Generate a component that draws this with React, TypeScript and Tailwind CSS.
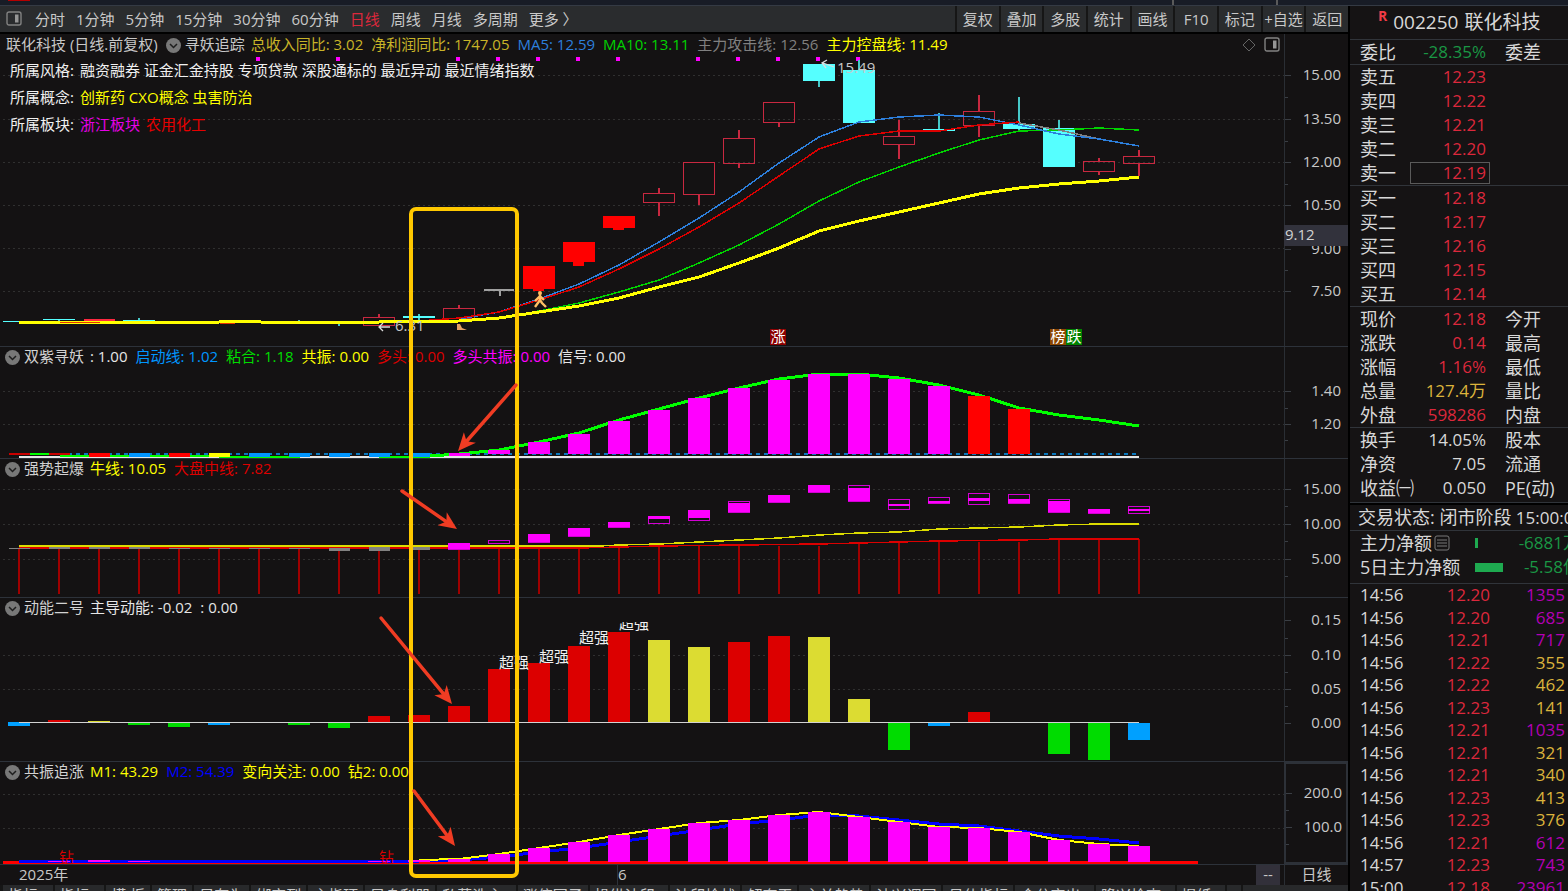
import React from "react";
import clsx from "clsx";

type Point = [number, number];

// Candles sit 40px apart, the first one is centred on x = 19
const cx = (i: number) => 19 + i * 40;
const toPoints = (pts: Point[]) => pts.map((p) => p.join(",")).join(" ");

const periods = [
  "分时", "1分钟", "5分钟", "15分钟", "30分钟", "60分钟",
  "日线", "周线", "月线", "多周期", "更多 〉",
];
const tools = ["复权", "叠加", "多股", "统计", "画线", "F10", "标记", "+自选", "返回"];

const bottomTabs = [
  "指标A", "指标B", "模 板", "管理", "另存为", "绑定到", "主指环", "异身利器",
  "私募洗主1", "涨停回子", "操纵波印1", "波印检战", "解套王", "主关趋势",
  "波兴调回", "易仕指标", "金分变出1", "隆兴检查1", "提纸1", "!",
];

const mainLegend = [
  { text: "总收入同比: 3.02", color: "text-[#c8b428]" },
  { text: "净利润同比: 1747.05", color: "text-[#c8b428]" },
  { text: "MA5: 12.59", color: "text-[#2d7fdc]" },
  { text: "MA10: 13.11", color: "text-[#00d200]" },
  { text: "主力攻击线: 12.56", color: "text-[#808080]" },
  { text: "主力控盘线: 11.49", color: "text-[#ffff00]" },
];

const tags = [
  { label: "所属风格:", parts: [{ text: "融资融券 证金汇金持股 专项贷款 深股通标的 最近异动 最近情绪指数", color: "text-[#f0f0f0]" }] },
  { label: "所属概念:", parts: [{ text: "创新药 CXO概念 虫害防治", color: "text-[#ffff00]" }] },
  {
    label: "所属板块:",
    parts: [
      { text: "浙江板块", color: "text-[#e600e6]" },
      { text: "农用化工", color: "text-[#e60000]" },
    ],
  },
];

// body top / bottom, wick top / bottom
type Candle = { i: number; kind: "up" | "down" | "limit"; t: number; b: number; wt?: number; wb?: number };

const candles: Candle[] = [
  { i: 0, kind: "down", t: 321, b: 322 },
  { i: 1, kind: "down", t: 319, b: 320, wb: 322 },
  { i: 3, kind: "down", t: 320, b: 321, wt: 318 },
  { i: 7, kind: "down", t: 321, b: 322, wt: 320 },
  { i: 8, kind: "down", t: 323, b: 324, wb: 326 },
  { i: 9, kind: "up", t: 317, b: 325, wt: 314 },
  { i: 10, kind: "down", t: 316, b: 318, wt: 314, wb: 320 },
  { i: 11, kind: "up", t: 308, b: 318, wt: 305 },
  { i: 13, kind: "limit", t: 266, b: 289 },
  { i: 14, kind: "limit", t: 242, b: 262 },
  { i: 15, kind: "limit", t: 216, b: 228 },
  { i: 16, kind: "up", t: 193, b: 202, wt: 188, wb: 216 },
  { i: 17, kind: "up", t: 162, b: 194, wb: 205 },
  { i: 18, kind: "up", t: 138, b: 163, wt: 130, wb: 168 },
  { i: 19, kind: "up", t: 102, b: 122, wb: 127 },
  { i: 20, kind: "down", t: 64, b: 81, wb: 87 },
  { i: 21, kind: "down", t: 70, b: 123, wt: 60 },
  { i: 22, kind: "up", t: 136, b: 144, wt: 120, wb: 159 },
  { i: 23, kind: "down", t: 129, b: 131, wt: 113 },
  { i: 24, kind: "up", t: 111, b: 125, wt: 95, wb: 137 },
  { i: 25, kind: "down", t: 124, b: 129, wt: 97, wb: 131 },
  { i: 26, kind: "down", t: 128, b: 167, wt: 120 },
  { i: 27, kind: "up", t: 161, b: 171, wt: 158, wb: 175 },
  { i: 28, kind: "up", t: 156, b: 163, wt: 150, wb: 176 },
];

const ma5: Point[] = [
  [459, 319], [499, 312], [539, 299], [579, 284], [619, 265], [659, 242], [699, 218], [739, 192],
  [779, 163], [819, 137], [859, 122], [899, 117], [939, 115], [979, 117], [1019, 125],
  [1059, 134], [1099, 139], [1139, 146],
];
const redLine: Point[] = [
  [379, 322], [419, 321], [459, 318], [499, 312], [539, 300], [579, 287], [619, 269], [659, 249],
  [699, 227], [739, 203], [779, 176], [819, 149], [859, 136], [899, 131], [939, 131],
  [979, 125], [1019, 122],
];
const greyLine: Point[] = [[1019, 123], [1059, 130], [1099, 139], [1139, 146]];
const ma10: Point[] = [
  [459, 321], [499, 318], [539, 311], [579, 303], [619, 292], [659, 280], [699, 263], [739, 245],
  [779, 224], [819, 201], [859, 182], [899, 167], [939, 153], [979, 140], [1019, 131],
  [1059, 130], [1099, 128], [1139, 130],
];
const controlLine: Point[] = [
  [19, 322], [219, 322], [221, 321], [259, 321], [261, 322], [379, 322], [459, 321], [499, 318],
  [539, 312], [579, 306], [619, 298], [659, 287], [699, 277], [739, 263], [779, 248],
  [819, 231], [859, 221], [899, 212], [939, 203], [979, 194], [1019, 188], [1059, 184],
  [1099, 181], [1139, 177],
];
const signalDots = [257, 337, 457, 497, 537, 577, 617, 697, 737, 777, 817, 857];

// [candle index, top]
const trendBars: Point[] = [
  [12, 450], [13, 442], [14, 434], [15, 421], [16, 410], [17, 398], [18, 388], [19, 380],
  [20, 374], [21, 374], [22, 379], [23, 386], [24, 396], [25, 409],
];
const trendLine: Point[] = [
  [430, 456], [459, 454], [499, 450], [539, 442], [579, 433], [619, 420], [659, 409], [699, 398],
  [739, 388], [779, 379], [819, 374], [859, 374], [899, 378], [939, 385], [979, 395],
  [1019, 408], [1059, 415], [1099, 420], [1139, 426],
];
const trendBlocks = [
  { x: 9, color: "#c80000" }, { x: 89, color: "#ff0000" }, { x: 129, color: "#0096ff" },
  { x: 169, color: "#ff0000" }, { x: 209, color: "#ffff00" }, { x: 249, color: "#0096ff" },
  { x: 289, color: "#0096ff" }, { x: 329, color: "#0096ff" }, { x: 369, color: "#0096ff" },
  { x: 409, color: "#0096ff" },
];

const bullLine: Point[] = [
  [19, 546], [599, 546], [619, 545], [659, 544], [699, 542], [739, 540], [779, 538], [819, 535],
  [859, 533], [899, 532], [939, 529], [979, 528], [1019, 527], [1059, 525], [1099, 524], [1139, 524],
];
const marketLine: Point[] = [
  [19, 548], [579, 548], [659, 546], [739, 545], [819, 544], [859, 543], [939, 541], [1019, 540], [1059, 539], [1139, 539],
];
const greyBlocks = [
  [0, 548, 1], [1, 547, 2], [2, 547, 2], [3, 547, 2], [4, 548, 1], [5, 548, 1], [6, 548, 1],
  [7, 548, 1], [8, 548, 3], [9, 546, 5], [10, 547, 3],
];
// outline top / bottom, filled top / bottom
const burstBlocks = [
  [11, 543, 549, 543, 549], [12, 540, 543, 540, 540], [13, 534, 542, 534, 542], [14, 528, 536, 528, 536],
  [15, 522, 527, 522, 527], [16, 516, 523, 516, 519], [17, 510, 520, 510, 518], [18, 501, 512, 503, 512],
  [19, 495, 502, 495, 502], [20, 485, 492, 485, 492], [21, 485, 501, 488, 501], [22, 499, 509, 504, 506],
  [23, 497, 503, 501, 503], [24, 493, 504, 498, 501], [25, 494, 503, 499, 503], [26, 499, 512, 501, 512],
  [27, 509, 513, 509, 513], [28, 506, 513, 509, 511],
];

// [candle index, top, bottom, color]
const energyBars: [number, number, number, string][] = [
  [0, 722, 726, "#00a0ff"], [1, 720, 722, "#dc0000"], [2, 721, 722, "#dcdc32"], [3, 723, 725, "#00dc00"],
  [4, 723, 727, "#00dc00"], [5, 723, 725, "#00a0ff"], [7, 723, 725, "#00dc00"], [8, 723, 728, "#00dc00"],
  [9, 716, 722, "#dc0000"], [10, 715, 722, "#dc0000"], [11, 706, 722, "#dc0000"], [12, 669, 722, "#dc0000"],
  [13, 663, 722, "#dc0000"], [14, 646, 722, "#dc0000"], [15, 632, 722, "#dc0000"], [16, 640, 722, "#dcdc32"],
  [17, 647, 722, "#dcdc32"], [18, 642, 722, "#dc0000"], [19, 636, 722, "#dc0000"], [20, 637, 722, "#dcdc32"],
  [21, 699, 722, "#dcdc32"], [22, 723, 750, "#00dc00"], [23, 723, 726, "#00a0ff"], [24, 712, 722, "#dc0000"],
  [26, 723, 754, "#00dc00"], [27, 723, 760, "#00dc00"], [28, 723, 740, "#00a0ff"],
];
const strongLabels: Point[] = [[499, 668], [539, 662], [579, 643], [619, 629]];

const chaseBars: Point[] = [
  [1, 861], [2, 860], [3, 861], [9, 861], [10, 860], [11, 859], [12, 854], [13, 848], [14, 842],
  [15, 835], [16, 829], [17, 823], [18, 820], [19, 815], [20, 812], [21, 817], [22, 822],
  [23, 827], [24, 828], [25, 832], [26, 840], [27, 844], [28, 846],
];
const m1: Point[] = chaseBars.slice(4).map(([i, y]) => [cx(i), y]);
const m2: Point[] = [
  [19, 861], [419, 861], [459, 860], [499, 857], [539, 852], [579, 848], [619, 842], [659, 836],
  [699, 830], [739, 824], [779, 820], [819, 815], [859, 816], [899, 820], [939, 824],
  [979, 826], [1019, 831], [1059, 836], [1099, 839], [1139, 843],
];

const asks = [["卖五", "12.23"], ["卖四", "12.22"], ["卖三", "12.21"], ["卖二", "12.20"], ["卖一", "12.19"]];
const bids = [["买一", "12.18"], ["买二", "12.17"], ["买三", "12.16"], ["买四", "12.15"], ["买五", "12.14"]];

const RED = "text-[#dc283c]";
const WHITE = "text-[#d8d8d8]";
const GREEN = "text-[#1a9644]";
const GOLD = "text-[#dcb43c]";
const PURPLE = "text-[#b400b4]";

const ticks = [
  ["14:56", "12.20", "1355"], ["14:56", "12.20", "685"], ["14:56", "12.21", "717"],
  ["14:56", "12.22", "355"], ["14:56", "12.22", "462"], ["14:56", "12.23", "141"],
  ["14:56", "12.21", "1035"], ["14:56", "12.21", "321"], ["14:56", "12.21", "340"],
  ["14:56", "12.23", "413"], ["14:56", "12.23", "376"], ["14:56", "12.21", "612"],
  ["14:57", "12.23", "743"], ["15:00", "12.18", "23961"],
];

const PanelIcon = () => (
  <svg className="size-4 shrink-0" viewBox="0 0 16 16" fill="none">
    <rect x="1" y="1" width="14" height="13" rx="2" stroke="#828282" strokeWidth="1.4" />
    <rect x="9" y="3.5" width="3.5" height="8" fill="#969696" />
  </svg>
);

const FoldButton = () => (
  <button type="button" aria-label="指标菜单" className="shrink-0">
    <svg className="size-[15px]" viewBox="0 0 15 15">
      <circle cx="7.5" cy="7.5" r="7.5" fill="#787878" />
      <path d="M4 6l3.5 3.5L11 6" fill="none" stroke="#1e1e1e" strokeWidth="1.5" />
    </svg>
  </button>
);

type LegendItem = { text: string; color: string };

const LegendItems = ({ items }: { items: LegendItem[] }) => (
  <span className="ml-1.5 flex gap-2">
    {items.map((item) => (
      <span key={item.text} className={item.color}>
        {item.text}
      </span>
    ))}
  </span>
);

const Legend = ({ title, items }: { title: string; items: LegendItem[] }) => (
  <div className="flex h-6 items-start pl-[5px] leading-[18px] whitespace-nowrap">
    <span className="flex h-5 items-center">
      <FoldButton />
    </span>
    <span className="ml-1 text-[#d2d2d2]">{title}</span>
    <LegendItems items={items} />
  </div>
);

const GridLines = ({ ys }: { ys: number[] }) => (
  <>
    {ys.map((y) => (
      <line key={y} x1="3" x2="100%" y1={y} y2={y} stroke="#303030" strokeDasharray="2 3" />
    ))}
  </>
);

// Plot area; `top` is the y value drawn on the first pixel row
const Plot = ({ top, className, children }: { top: number; className: string; children: React.ReactNode }) => (
  <svg className={clsx("block w-full", className)} shapeRendering="crispEdges">
    <g transform={`translate(0 ${-top})`}>{children}</g>
  </svg>
);

type AxisProps = { top: number; className: string; labels: [string, number][]; minor?: number[] };

const Axis = ({ top, className, labels, minor = [] }: AxisProps) => (
  <svg className={clsx("block w-16 shrink-0", className)} shapeRendering="crispEdges">
    <g transform={`translate(0 ${-top})`}>
      {minor.map((y) => (
        <line key={y} x1="0" x2="3" y1={y} y2={y} stroke="#3a3e44" />
      ))}
      {labels.map(([text, y]) => (
        <React.Fragment key={text}>
          <line x1="0" x2="6" y1={y} y2={y} stroke="#3a3e44" />
          <text x="56" y={y + 5} textAnchor="end" fill="#c8c8c8">
            {text}
          </text>
        </React.Fragment>
      ))}
    </g>
  </svg>
);

const Panel = ({ children, axis }: { children: React.ReactNode; axis: React.ReactNode }) => (
  <section className="flex border-b border-[#2d323a]">
    <div className="min-w-0 flex-1">{children}</div>
    {axis}
  </section>
);

const CandleShape = ({ i, kind, t, b, wt, wb }: Candle) => {
  const x = cx(i);
  const stroke = kind === "down" ? "#46c8c8" : "#c82840";
  return (
    <g>
      {wt && <line x1={x} x2={x} y1={wt} y2={t} stroke={stroke} strokeWidth="2" />}
      {wb && <line x1={x} x2={x} y1={b} y2={wb} stroke={stroke} strokeWidth="2" />}
      {kind === "up" && <rect x={x - 15.5} y={t + 0.5} width="31" height={b - t} fill="none" stroke={stroke} />}
      {kind === "down" && <rect x={x - 16} y={t} width="32" height={b - t} fill="#55ffff" />}
      {kind === "limit" && (
        <>
          <rect x={x - 16} y={t} width="32" height={b - t} fill="#ff0000" />
          <rect x={x - 6} y={b} width="11" height={i === 14 ? 4 : 2} fill="#ff0000" />
        </>
      )}
    </g>
  );
};

const Badge = ({ x, text, fill }: { x: number; text: string; fill: string }) => (
  <g>
    <rect x={x} y="329" width="16" height="16" fill={fill} />
    <text x={x + 8} y="342" textAnchor="middle" fill="#ffffff">
      {text}
    </text>
  </g>
);

const PricePanel = () => (
  <Panel
    axis={
      <Axis
        top={34}
        className="h-[312px] border-l border-[#2a2e34]"
        labels={[["15.00", 75], ["13.50", 119], ["12.00", 162], ["10.50", 205], ["9.00", 249], ["7.50", 291]]}
        minor={[97, 141, 184, 227, 270]}
      />
    }
  >
    <div className="flex h-6 items-start pl-[6px] leading-5 whitespace-nowrap">
      <span className="text-[#c8c8c8]">联化科技 (日线.前复权)</span>
      <span className="ml-2 flex h-[22px] items-center">
        <FoldButton />
      </span>
      <span className="ml-1 text-[#c8c8c8]">寻妖追踪</span>
      <LegendItems items={mainLegend} />
      <span className="ml-auto flex h-[22px] items-center gap-2 pr-1">
        <svg className="size-3.5" viewBox="0 0 14 14">
          <path d="M7 1l6 6-6 6-6-6z" fill="none" stroke="#646464" />
        </svg>
        <PanelIcon />
      </span>
    </div>
    <div className="relative">
      <Plot top={58} className="h-[288px] overflow-visible">
        <GridLines ys={[75, 119, 162, 205, 248, 291]} />
        {signalDots.map((x) => (
          <rect key={x} x={x - 1} y="57" width="4" height="4" fill="#ff00ff" />
        ))}
        {candles.map((c) => (
          <CandleShape key={c.i} {...c} />
        ))}
        <path d="M484 289.5h30M499.5 290v6" stroke="#a0a0a0" fill="none" strokeWidth="2" />
        <path d="M84 320h31" stroke="#ff2840" strokeWidth="3" />
        <g fill="none">
          <polyline points={toPoints(ma10)} stroke="#00d200" strokeWidth="1.5" />
          <polyline points={toPoints(greyLine)} stroke="#808080" strokeWidth="1.5" />
          <polyline points={toPoints(ma5)} stroke="#2d7fdc" strokeWidth="1.5" />
          <polyline points={toPoints(redLine)} stroke="#dc0000" strokeWidth="1.5" />
          <polyline points={toPoints(controlLine)} stroke="#ffff00" strokeWidth="3" />
        </g>
        <path d="M60 322.5h40M220 323.5h15" stroke="#e63200" />
        <g shapeRendering="auto">
          <path d="M390 327h-11m4-4l-4 4 4 4" fill="none" stroke="#dcdcdc" strokeWidth="1.3" />
          <text x="395" y="331" fill="#c8c8c8">6.31</text>
          <path d="M834 67l-11-4m4-3l-5 3 4 5" fill="none" stroke="#dcdcdc" strokeWidth="1.3" />
          <text x="837" y="73" fill="#c8c8c8">15.49</text>
          <path d="M457 324v6h10l-5-2-2-4z" fill="#e6a064" />
          <circle cx="540" cy="293" r="2" fill="#ffbe64" />
          <path
            d="M540 294v6l-5 7M540 300l2 3 4 4M540 296l-5 5M540 296l4 4"
            fill="none"
            stroke="#ffbe64"
            strokeWidth="2.4"
          />
        </g>
        <Badge x={770} text="涨" fill="#8c0000" />
        <Badge x={1050} text="榜" fill="#8c4600" />
        <Badge x={1066} text="跌" fill="#008200" />
      </Plot>
      <div className="absolute top-0 left-2.5 flex flex-col gap-[3px] leading-6 whitespace-nowrap">
        {tags.map((tag) => (
          <p key={tag.label} className="flex gap-1.5">
            <span className="text-[#f0f0f0]">{tag.label}</span>
            {tag.parts.map((part) => (
              <span key={part.text} className={part.color}>
                {part.text}
              </span>
            ))}
          </p>
        ))}
      </div>
    </div>
  </Panel>
);

const TrendPanel = () => (
  <Panel
    axis={
      <Axis
        top={347}
        className="h-[111px] border-l border-[#2a2e34]"
        labels={[["1.40", 391], ["1.20", 424]]}
        minor={[408, 440]}
      />
    }
  >
    <Legend
      title="双紫寻妖"
      items={[
        { text: ": 1.00", color: "text-[#e6e6e6]" },
        { text: "启动线: 1.02", color: "text-[#0096ff]" },
        { text: "粘合: 1.18", color: "text-[#00dc00]" },
        { text: "共振: 0.00", color: "text-[#ffff00]" },
        { text: "多头: 0.00", color: "text-[#dc0000]" },
        { text: "多头共振: 0.00", color: "text-[#ff00ff]" },
        { text: "信号: 0.00", color: "text-[#e6e6e6]" },
      ]}
    />
    <Plot top={371} className="h-[87px]">
      <GridLines ys={[391, 424]} />
      <path d="M60 453.5H1139" stroke="#0a78be" strokeWidth="2" strokeDasharray="4 4" />
      <path d="M19 456.5H1139" stroke="#e6e6e6" strokeWidth="2" />
      <path d="M30 454H60M60 455.5H219M219 456.5H300M379 456.5H430" stroke="#00ff00" strokeWidth="2" />
      <rect x="49" y="453" width="21" height="2" fill="#c80000" />
      {trendBlocks.map((b) => (
        <rect key={b.x} x={b.x} y="453" width="21" height={b.x === 9 ? 2 : 4} fill={b.color} />
      ))}
      <polyline points={toPoints(trendLine)} fill="none" stroke="#00ff00" strokeWidth="3" />
      <rect x="449" y="453" width="21" height="3" fill="#ff00ff" />
      {trendBars.map(([i, y]) => (
        <rect key={i} x={cx(i) - 11} y={y} width="22" height={454 - y} fill={i > 23 ? "#ff0000" : "#ff00ff"} />
      ))}
    </Plot>
  </Panel>
);

const BurstPanel = () => (
  <Panel
    axis={
      <Axis
        top={459}
        className="h-[138px] border-l border-[#2a2e34]"
        labels={[["15.00", 489], ["10.00", 524], ["5.00", 559]]}
        minor={[506, 541, 576]}
      />
    }
  >
    <Legend
      title="强势起爆"
      items={[
        { text: "牛线: 10.05", color: "text-[#ffff00]" },
        { text: "大盘中线: 7.82", color: "text-[#dc0000]" },
      ]}
    />
    <Plot top={483} className="h-[114px]">
      <GridLines ys={[489, 524, 559]} />
      {Array.from({ length: 29 }, (_, i) => {
        const y = i < 16 ? 548 : i < 21 ? 546 : i < 26 ? 542 : 539;
        return <rect key={i} x={cx(i) - 1} y={y} width="2" height={594 - y} fill="#a00000" />;
      })}
      <polyline points={toPoints(marketLine)} fill="none" stroke="#dc0000" strokeWidth="1.5" />
      {greyBlocks.map(([i, y, h]) => (
        <rect key={i} x={cx(i) - 10} y={y} width="21" height={h} fill="#828282" />
      ))}
      <polyline points={toPoints(bullLine)} fill="none" stroke="#dcdc00" strokeWidth="1.5" />
      {burstBlocks.map(([i, t, b, ft, fb]) => (
        <g key={i}>
          <rect x={cx(i) - 10.5} y={t + 0.5} width="21" height={b - t} fill="none" stroke="#d200d2" />
          <rect x={cx(i) - 11} y={ft} width="22" height={fb - ft} fill="#ff00ff" />
        </g>
      ))}
    </Plot>
  </Panel>
);

const EnergyPanel = () => (
  <Panel
    axis={
      <Axis
        top={598}
        className="h-[163px] border-l border-[#2a2e34]"
        labels={[["0.15", 620], ["0.10", 655], ["0.05", 689], ["0.00", 723]]}
        minor={[638, 672, 706]}
      />
    }
  >
    <Legend
      title="动能二号"
      items={[
        { text: "主导动能: -0.02", color: "text-[#e6e6e6]" },
        { text: ": 0.00", color: "text-[#e6e6e6]" },
      ]}
    />
    <Plot top={622} className="h-[139px]">
      <GridLines ys={[655, 689]} />
      {energyBars.map(([i, t, b, color]) => (
        <rect key={i} x={cx(i) - 11} y={t} width="22" height={b - t} fill={color} />
      ))}
      <path d="M19 722.5H1139" stroke="#d2d2d2" strokeWidth="1" />
      {strongLabels.map(([x, y]) => (
        <text key={x} x={x} y={y} fill="#f0f0f0">
          超强
        </text>
      ))}
    </Plot>
  </Panel>
);

const ChasePanel = () => (
  <Panel
    axis={
      <Axis
        top={765}
        className="h-[102px] border-2 border-[#2d3138]"
        labels={[["200.0", 794], ["100.0", 828]]}
        minor={[811, 845]}
      />
    }
  >
    <Legend
      title="共振追涨"
      items={[
        { text: "M1: 43.29", color: "text-[#ffff00]" },
        { text: "M2: 54.39", color: "text-[#0000ff]" },
        { text: "变向关注: 0.00", color: "text-[#ffff00]" },
        { text: "钻2: 0.00", color: "text-[#ffff00]" },
      ]}
    />
    <Plot top={786} className="h-[78px]">
      <GridLines ys={[794, 828]} />
      <path d="M3 862.5H1198" stroke="#ff0000" strokeWidth="3" />
      <polyline points={toPoints(m2)} fill="none" stroke="#0000ff" strokeWidth="3" />
      <polyline points={toPoints(m1)} fill="none" stroke="#ffff00" strokeWidth="2" />
      {chaseBars.map(([i, y]) => (
        <rect key={i} x={cx(i) - 11} y={y} width="22" height={862 - y} fill="#ff00ff" />
      ))}
      <text x="59" y="863" fill="#dc0000">钻</text>
      <text x="379" y="863" fill="#dc0000">钻</text>
    </Plot>
  </Panel>
);

const Arrow = ({ from, to }: { from: Point; to: Point }) => {
  const angle = (Math.atan2(to[1] - from[1], to[0] - from[0]) * 180) / Math.PI;
  const length = Math.hypot(to[0] - from[0], to[1] - from[1]);
  return (
    <g transform={`translate(${to[0]} ${to[1]}) rotate(${angle})`}>
      <path d={`M${-length} 0H-10`} stroke="#f03c23" strokeWidth="3.5" strokeLinecap="round" />
      <path d="M0 0L-18 -8L-13 0L-18 8Z" fill="#f03c23" />
    </g>
  );
};

// Hand-drawn marks lying over all the panels
const Annotations = () => (
  <svg className="pointer-events-none absolute inset-0 h-full w-full">
    <g transform="translate(0 -34)" fill="none">
      <rect x="411" y="209" width="106" height="667" rx="5" stroke="#ffc800" strokeWidth="4" />
      <Arrow from={[516, 385]} to={[458, 451]} />
      <Arrow from={[402, 491]} to={[457, 529]} />
      <Arrow from={[381, 618]} to={[452, 704]} />
      <Arrow from={[414, 791]} to={[455, 846]} />
    </g>
  </svg>
);

const Toolbar = () => (
  <nav className="flex h-7 items-stretch border-b-2 border-black bg-[#2a2c2e] text-[#c8c8c8]">
    <div className="flex flex-1 items-center gap-[11px] overflow-hidden pl-1.5 whitespace-nowrap">
      <PanelIcon />
      {periods.map((p) => (
        <button key={p} type="button" className={clsx("first-of-type:ml-0.5", p === "日线" && "text-[#dc283c]")}>
          {p}
        </button>
      ))}
    </div>
    <div className="grid w-[393px] grid-cols-9">
      {tools.map((t) => (
        <button key={t} type="button" className="border-l-2 border-[#161616] whitespace-nowrap">
          {t}
        </button>
      ))}
    </div>
  </nav>
);

type QuoteRow = { label: string; value: string; color?: string; extra?: string; framed?: boolean };

const QuoteTable = ({ rows, className }: { rows: QuoteRow[]; className?: string }) => (
  <div className={clsx("border-b border-[#30343a]", className)}>
    <table className="w-full table-fixed">
      <tbody>
        {rows.map((r) => (
          <tr key={r.label} className="h-6 leading-[22px] whitespace-nowrap">
            <th scope="row" className="w-[62px] p-0 pl-3 text-left text-lg leading-[22px] font-normal text-[#d8d8d8]">
              {r.label}
            </th>
            <td className="w-20 p-0">
              <span
                className={clsx(
                  "block h-[22px] border pr-[3px] text-right leading-5",
                  r.framed ? "border-[#5a5a5a]" : "border-transparent",
                  r.color ?? RED
                )}
              >
                {r.value}
              </span>
            </td>
            <td className="p-0 pl-[15px] text-lg leading-[22px] text-[#d8d8d8]">{r.extra}</td>
          </tr>
        ))}
      </tbody>
    </table>
  </div>
);

const Quotes = () => (
  <aside className="w-[220px] shrink-0 overflow-hidden border-l-2 border-black bg-[#151314] text-[17px]">
    <div className="-ml-0.5">
      <h1 className="flex h-[34px] items-center gap-1.5 border-b border-[#30343a] pl-[30px] text-[19px] whitespace-nowrap text-[#d8d8d8]">
        <sup className="text-sm font-bold text-[#f03c46]">R</sup>
        <span>002250</span>
        <span>联化科技</span>
      </h1>
      <QuoteTable rows={[{ label: "委比", value: "-28.35%", color: GREEN, extra: "委差" }]} />
      <QuoteTable rows={asks.map(([label, value]) => ({ label, value, framed: label === "卖一" }))} />
      <QuoteTable rows={bids.map(([label, value]) => ({ label, value }))} />
      <QuoteTable
        rows={[
          { label: "现价", value: "12.18", extra: "今开" },
          { label: "涨跌", value: "0.14", extra: "最高" },
          { label: "涨幅", value: "1.16%", extra: "最低" },
          { label: "总量", value: "127.4万", color: GOLD, extra: "量比" },
          { label: "外盘", value: "598286", extra: "内盘" },
        ]}
      />
      <QuoteTable
        className="pb-0.5"
        rows={[
          { label: "换手", value: "14.05%", color: WHITE, extra: "股本" },
          { label: "净资", value: "7.05", color: WHITE, extra: "流通" },
          { label: "收益㈠", value: "0.050", color: WHITE, extra: "PE(动)" },
        ]}
      />
      <p className="border-t-2 border-b border-t-black border-b-[#30343a] pl-2.5 leading-[25px] whitespace-nowrap text-[#d8d8d8]">
        <span className="text-lg leading-[25px]">交易状态: 闭市阶段</span> 15:00:00
      </p>
      <div className="border-b border-[#30343a] pb-1 leading-6 whitespace-nowrap">
        <div className="-mr-3 flex items-center pl-3">
          <span className="text-lg leading-6 text-[#d8d8d8]">主力净额</span>
          <svg className="ml-0.5 size-4" viewBox="0 0 16 16">
            <rect x="1" y="1" width="14" height="14" rx="2" fill="none" stroke="#787878" />
            <path d="M3 5h10M3 8h10M3 11h10" stroke="#787878" />
          </svg>
          <span className="ml-[25px] h-2.5 w-[3px] bg-[#1eaa50]" />
          <span className={clsx("ml-auto", GREEN)}>-6881万</span>
        </div>
        <div className="-mr-3 flex items-center pl-3">
          <span className="w-[115px] text-lg leading-6 text-[#d8d8d8]">5日主力净额</span>
          <span className="h-[9px] w-7 bg-[#1eaa50]" />
          <span className={clsx("ml-auto", GREEN)}>-5.58亿</span>
        </div>
      </div>
      <table className="h-[315px] w-full leading-5">
        <tbody>
          {ticks.map(([time, price, volume], i) => (
            <tr key={i}>
              <td className="w-20 p-0 pl-3 text-[#d8d8d8]">{time}</td>
              <td className={clsx("w-[62px] p-0 text-right", RED)}>{price}</td>
              <td className={clsx("p-0 pr-[3px] text-right", Number(volume) > 500 ? PURPLE : GOLD)}>{volume}</td>
            </tr>
          ))}
        </tbody>
      </table>
    </div>
  </aside>
);

const App = () => {
  return (
    <div className="flex h-screen flex-col overflow-hidden bg-[#141213] font-['Open_Sans','Noto_Sans_CJK_SC',sans-serif] text-[15px]">
      <header className="flex h-1.5 shrink-0 border-b border-[#343a44] bg-[#181c26] pl-2">
        <span className="h-px w-[22px] bg-[#b40000]" />
        <span className="mr-[290px] ml-auto w-[106px] border-x-2 border-[#5a5a5a]" />
      </header>
      <div className="flex min-h-0 flex-1">
        <div className="min-w-0 flex-1">
          <Toolbar />
          <main className="relative">
            <PricePanel />
            <TrendPanel />
            <BurstPanel />
            <EnergyPanel />
            <ChasePanel />
            <div className="flex h-5 leading-[18px] text-[#c8c8c8]">
              <span className="w-[618px] border-r border-[#2d323a] pl-[19px]">2025年</span>
              <span>6</span>
              <span className="mr-1 ml-auto w-6 bg-[#32303a] text-center">--</span>
              <span className="w-16 border-l border-[#2a2e34] text-center">日线</span>
            </div>
            {/* crosshair price on the axis */}
            <span className="absolute top-[191px] right-0 h-[21px] w-16 bg-[#32323c] pl-px leading-[19px] text-[#d2d2d2]">
              9.12
            </span>
            <Annotations />
          </main>
          <div className="flex gap-0.5 overflow-hidden bg-[#161616] pl-[3px] text-[#c8c8c8]">
            {bottomTabs.map((t) => (
              <button key={t} type="button" className="h-6 shrink-0 bg-[#28292b] px-[5px] pb-1 leading-5 whitespace-nowrap">
                {t}
              </button>
            ))}
            <span className="flex-1 bg-[#28292b]" />
          </div>
        </div>
        <Quotes />
      </div>
    </div>
  );
};

export default App;
